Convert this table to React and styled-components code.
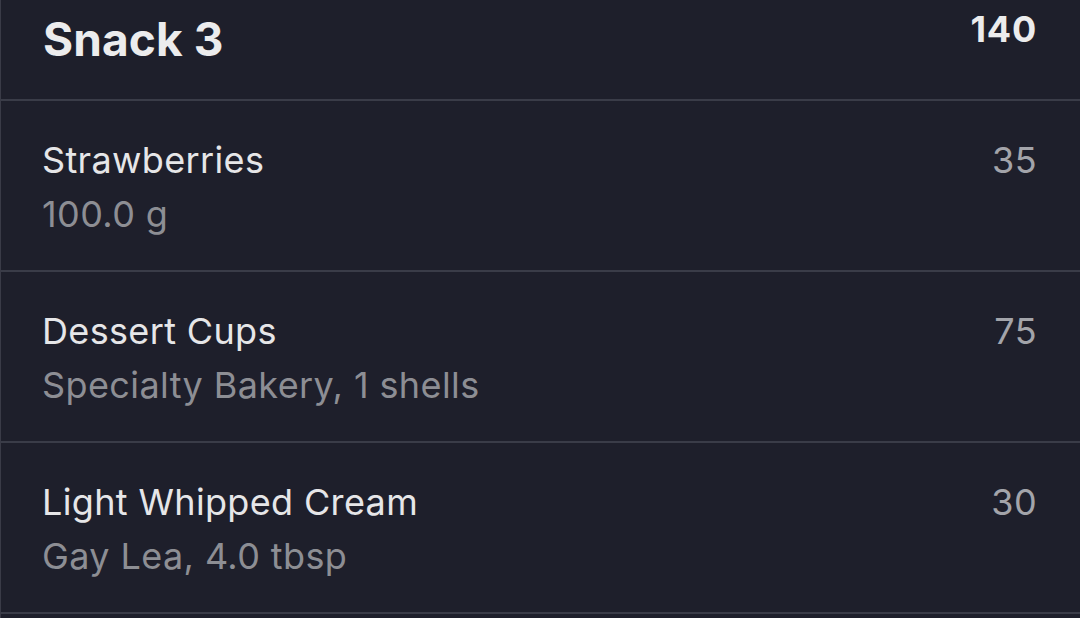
import React from 'react';
import styled, { createGlobalStyle } from 'styled-components';

const GlobalStyle = createGlobalStyle`
  html, body {
    margin: 0;
    padding: 0;
    background: #1e1f2b;
  }
  body {
    font-family: Inter, "Noto Sans", "Liberation Sans", sans-serif;
    -webkit-font-smoothing: antialiased;
  }
`

const Screen = styled.div`
  width: 1080px;
  height: 618px;
  overflow: hidden;
  background: #1e1f2b;
  border-left: 1px solid #3a3b47;
  box-sizing: border-box;
`

const MealHeader = styled.div`
  height: 99px;
  display: flex;
  justify-content: space-between;
  align-items: flex-start;
  padding: 0 43px 0 42px;
  border-bottom: 2px solid #3a3c48;
`

const MealTitle = styled.h2`
  margin: 10px 0 0;
  font-size: 46px;
  line-height: 58px;
  font-weight: 700;
  letter-spacing: 0.1px;
  color: #ececed;
`

const MealTotal = styled.span`
  margin-top: 7px;
  font-size: 36px;
  line-height: 44px;
  font-weight: 700;
  letter-spacing: 0.8px;
  color: #ececed;
`

const FoodRow = styled.div`
  height: 169px;
  display: flex;
  justify-content: space-between;
  align-items: flex-start;
  padding: 0 43px 0 41px;
  border-bottom: 2px solid #3a3c48;
  box-sizing: content-box;
`

const FoodInfo = styled.div`
  display: flex;
  flex-direction: column;
  gap: 10px;
  padding-top: 37px;
`

const FoodName = styled.span`
  font-size: 36px;
  line-height: 44px;
  letter-spacing: 0.35px;
  color: #e6e6e8;
`

const FoodDetail = styled.span`
  font-size: 36px;
  line-height: 44px;
  letter-spacing: 0.4px;
  color: #8d8e94;
`

const Calories = styled.span`
  padding-top: 37px;
  font-size: 36px;
  line-height: 44px;
  letter-spacing: 0.4px;
  color: #a3a4aa;
`

const foods = [
  { name: 'Strawberries', detail: '100.0 g', cal: 35 },
  { name: 'Dessert Cups', detail: 'Specialty Bakery, 1 shells', cal: 75 },
  { name: 'Light Whipped Cream', detail: 'Gay Lea, 4.0 tbsp', cal: 30 },
];

export default function App() {
  return (
    <Screen>
      <GlobalStyle />
      <MealHeader>
        <MealTitle>Snack 3</MealTitle>
        <MealTotal>140</MealTotal>
      </MealHeader>
      {foods.map(food => (
        <FoodRow key={food.name}>
          <FoodInfo>
            <FoodName>{food.name}</FoodName>
            <FoodDetail>{food.detail}</FoodDetail>
          </FoodInfo>
          <Calories>{food.cal}</Calories>
        </FoodRow>
      ))}
    </Screen>
  );
}
